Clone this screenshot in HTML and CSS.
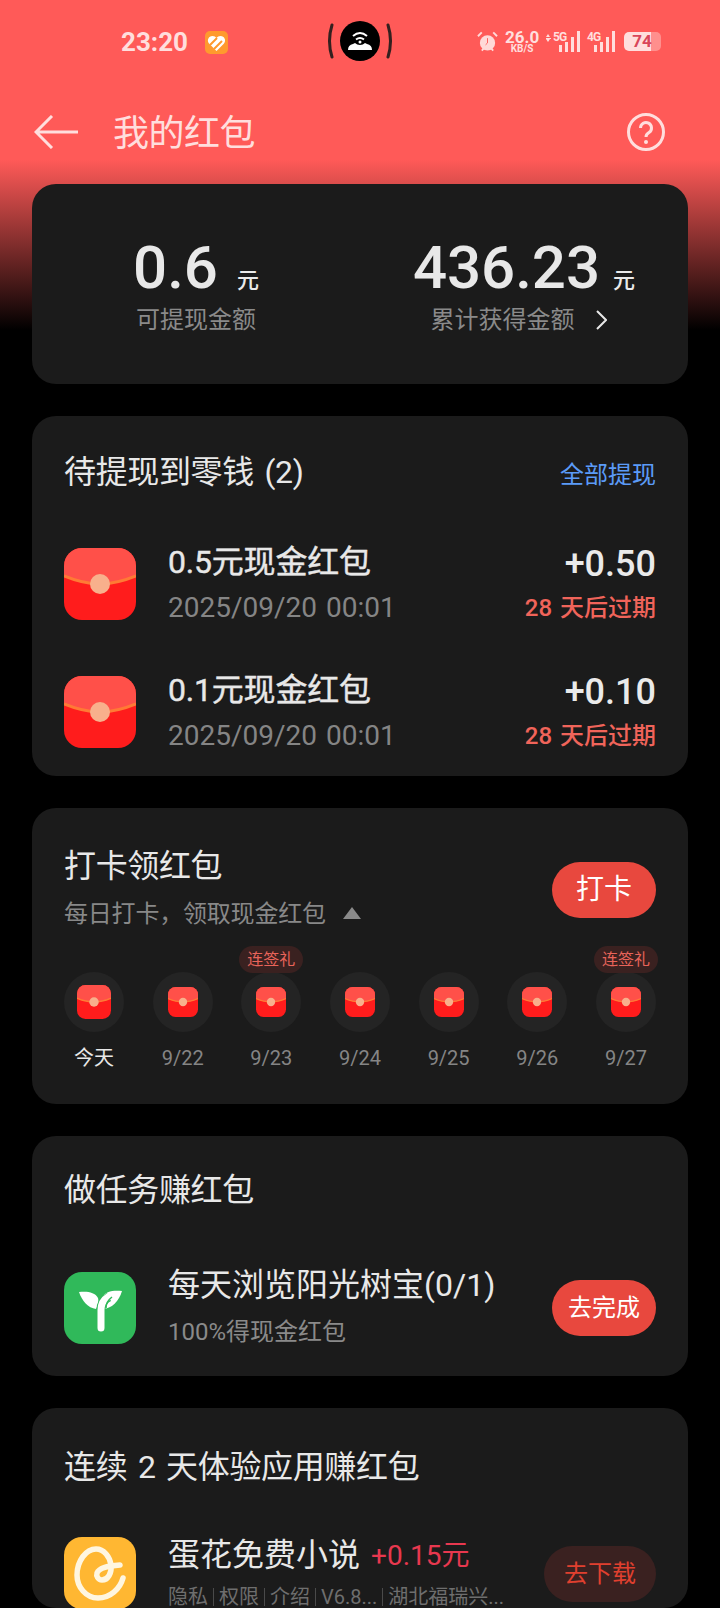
FILE: index.html
```html
<!DOCTYPE html>
<html>
  <head>
    <meta charset="UTF-8">
    <title>我的红包</title>
    <link rel="stylesheet" href="styles.css">
  </head>
  <body>
    <svg class="defs" width="0" height="0">
      <symbol id="packet" viewBox="0 0 72 72">
        <rect width="72" height="72" rx="18" fill="#ff1c1c"/>
        <path d="M0 18a18 18 0 0 1 18-18h36a18 18 0 0 1 18 18v10c-12 5-24 8-36 8s-24-3-36-8z" fill="#ff5049"/>
        <path d="M0 28c12 5 24 8 36 8s24-3 36-8" fill="none" stroke="#ff7a35" stroke-width="3"/>
        <circle cx="36" cy="36" r="10" fill="#f8b08c"/>
      </symbol>
    </svg>

    <div class="status">
      <span class="time">23:20</span>
      <svg class="heart" viewBox="0 0 23 23">
        <rect width="23" height="23" rx="5" fill="#ff9a2e"/>
        <path d="M11.500 20 4 12.500C1.500 9.500 3.500 5 7.500 5c1.800 0 3 .8 4 2 1-1.200 2.200-2 4-2 4 0 6 4.500 3.500 7.500z" fill="#fff"/>
        <path d="M5 14l7-7M9 18l8-8" stroke="#ff9a2e" stroke-width="2"/>
      </svg>
      <div class="island">
        <svg width="64" height="40" viewBox="0 0 64 40">
          <path d="M4 4Q-1 20 4 36M60 4Q65 20 60 36" fill="none" stroke="#33201f" stroke-width="3" stroke-linecap="round"/>
          <circle cx="32" cy="20" r="20" fill="#000"/>
          <path d="M20 29q0-5 5-6l2-1q2 2 5 2t5-2l2 1q5 1 5 6z" fill="#fff"/>
          <path d="M25 15q7-6 14 0M28 18.500q4-3 8 0" fill="none" stroke="#fff" stroke-width="2"/>
          <circle cx="32" cy="21" r="1.500" fill="#fff"/>
        </svg>
      </div>
      <div class="indicators">
        <svg class="alarm" viewBox="0 0 22 23">
          <circle cx="11" cy="13" r="8" fill="#ffd9d8"/>
          <path d="M1 6l4-4M21 6l-4-4M5 21l2-2M17 21l-2-2" stroke="#ffd9d8" stroke-width="2"/>
          <path d="M11 8v5l-2 2" fill="none" stroke="#ff5a58" stroke-width="1"/>
        </svg>
        <div class="speed"><b>26.0</b><span>KB/S</span></div>
        <div class="net net-5g">
          <span class="updown"></span>
          <span class="tag">5G</span>
          <span class="bars"><i class="b1"></i><i class="b2"></i><i class="b3"></i><i class="b4"></i></span>
        </div>
        <div class="net net-4g">
          <span class="tag">4G</span>
          <span class="bars"><i class="b1"></i><i class="b2"></i><i class="b3"></i><i class="b4"></i></span>
        </div>
        <div class="battery"><span>74</span></div>
      </div>
    </div>

    <div class="topbar">
      <svg class="back" viewBox="0 0 44 34">
        <path d="M18 1 2 17l16 16M2 17h42" fill="none" stroke="#ffdedd" stroke-width="3"/>
      </svg>
      <h1>我的红包</h1>
      <svg class="help" viewBox="0 0 38 38">
        <circle cx="19" cy="19" r="17.500" fill="none" stroke="#ffdedd" stroke-width="3"/>
        <path d="M13.500 15a5.500 5.500 0 1 1 8.500 4.600c-2 1.300-3 2.200-3 4.400" fill="none" stroke="#ffdedd" stroke-width="3"/>
        <circle cx="19" cy="29" r="2" fill="#ffdedd"/>
      </svg>
    </div>

    <div class="cards">
      <section class="card balance">
        <div class="sum">
          <div class="sum-value"><b>0.6</b><span>元</span></div>
          <div class="sum-label">可提现金额</div>
        </div>
        <div class="sum sum-total">
          <div class="sum-value"><b>436.23</b><span>元</span></div>
          <div class="sum-label">累计获得金额
            <svg class="chevron" viewBox="0 0 12 20"><path d="M2 1l9 9-9 9" fill="none" stroke="#e8e8e8" stroke-width="2"/></svg>
          </div>
        </div>
      </section>

      <section class="card pending">
        <div class="card-head">
          <h2>待提现到零钱 (2)</h2>
          <a class="link">全部提现</a>
        </div>
        <div class="packet-row">
          <svg class="app-icon"><use href="#packet"/></svg>
          <div class="packet-info">
            <div class="row-title">0.5元现金红包</div>
            <div class="row-date">2025/09/20 00:01</div>
          </div>
          <div class="packet-amount">
            <div class="amount">+0.50</div>
            <div class="expiry">28 天后过期</div>
          </div>
        </div>
        <div class="packet-row">
          <svg class="app-icon"><use href="#packet"/></svg>
          <div class="packet-info">
            <div class="row-title">0.1元现金红包</div>
            <div class="row-date">2025/09/20 00:01</div>
          </div>
          <div class="packet-amount">
            <div class="amount">+0.10</div>
            <div class="expiry">28 天后过期</div>
          </div>
        </div>
      </section>

      <section class="card checkin">
        <div class="checkin-head">
          <div>
            <h2>打卡领红包</h2>
            <div class="checkin-sub">每日打卡，领取现金红包<i class="caret"></i></div>
          </div>
          <a class="btn">打卡</a>
        </div>
        <div class="days">
          <div class="day today">
            <div class="day-circle"><svg><use href="#packet"/></svg></div>
            <div class="day-label">今天</div>
          </div>
          <div class="day">
            <div class="day-circle"><svg><use href="#packet"/></svg></div>
            <div class="day-label">9/22</div>
          </div>
          <div class="day">
            <div class="day-circle"><svg><use href="#packet"/></svg></div>
            <span class="gift">连签礼</span>
            <div class="day-label">9/23</div>
          </div>
          <div class="day">
            <div class="day-circle"><svg><use href="#packet"/></svg></div>
            <div class="day-label">9/24</div>
          </div>
          <div class="day">
            <div class="day-circle"><svg><use href="#packet"/></svg></div>
            <div class="day-label">9/25</div>
          </div>
          <div class="day">
            <div class="day-circle"><svg><use href="#packet"/></svg></div>
            <div class="day-label">9/26</div>
          </div>
          <div class="day">
            <div class="day-circle"><svg><use href="#packet"/></svg></div>
            <span class="gift">连签礼</span>
            <div class="day-label">9/27</div>
          </div>
        </div>
      </section>

      <section class="card tasks">
        <h2>做任务赚红包</h2>
        <div class="task-row">
          <svg class="app-icon" viewBox="0 0 72 72">
            <rect width="72" height="72" rx="18" fill="#30b95a"/>
            <path d="M15 20c8-1 16 0 19 6 1 3 0 7-2 11-8-1-14-8-17-17z" fill="#fff"/>
            <path d="M58 19c-8-1-17 0-20 7-1 3-1 7 0 11 10 0 17-8 20-18z" fill="#fff"/>
            <path d="M37 56V38c0-6 2-10 8-13" fill="none" stroke="#30b95a" stroke-width="9"/>
            <path d="M37 56V38c0-6 2-10 7-13" fill="none" stroke="#fff" stroke-width="7" stroke-linecap="round"/>
            <path d="M42 36c0-5 2-8 6-11" fill="none" stroke="#30b95a" stroke-width="1.500"/>
          </svg>
          <div class="task-info">
            <div class="row-title">每天浏览阳光树宝(0/1)</div>
            <div class="task-sub">100%得现金红包</div>
          </div>
          <a class="btn btn-small">去完成</a>
        </div>
      </section>

      <section class="card apps">
        <h2>连续 2 天体验应用赚红包</h2>
        <div class="app-row">
          <svg class="app-icon" viewBox="0 0 72 72">
            <rect width="72" height="72" rx="18" fill="#ffb732"/>
            <path d="M59 41C56 52 46 61 34 61 22 61 13 50 13 38 13 24 22 12 32 12c8 0 14 8 15 16 1 8-3 15-9 15-4 0-6-4-5-7 2-5 9-7 23-8" fill="none" stroke="#fff6e0" stroke-width="5.500" stroke-linecap="round"/>
          </svg>
          <div class="app-info">
            <div class="app-title"><span class="row-title">蛋花免费小说</span><span class="bonus">+0.15元</span></div>
            <div class="app-meta">隐私<i></i>权限<i></i>介绍<i></i>V6.8...<i></i>湖北福瑞兴...</div>
          </div>
          <a class="btn btn-muted">去下载</a>
        </div>
      </section>
    </div>
  </body>
</html>
```

FILE: styles.css
```css
html
{
  background-color:#000;
  overflow:hidden;
}
body
{
  margin:0;
  width:720px;
  height:1608px;
  overflow:hidden;
  font-family:Roboto,"Noto Sans CJK SC",sans-serif;
  color:#eaeaea;
  background:linear-gradient(#ff5a58 0,#ff5a58 160px,#000 330px);
}
h1,h2
{
  margin:0;
  font-weight:400;
}
h2
{
  font-size:32px;
  line-height:44px;
  letter-spacing:-.35px;
  word-spacing:3px;
  color:#e8e8e8;
}
.defs
{
  display:block;
  height:0;
}

/* status bar */
.status
{
  position:relative;
  height:84px;
  display:flex;
  align-items:center;
  padding-left:121px;
  color:#ffdedd;
}
.time
{
  font-size:26px;
  font-weight:700;
  width:84px;
}
.heart
{
  width:23px;
  height:23px;
}
.island
{
  position:absolute;
  left:328px;
  top:21px;
  height:40px;
}
.indicators
{
  position:absolute;
  left:477px;
  top:30px;
  height:23px;
  display:flex;
  align-items:center;
}
.alarm
{
  width:21px;
  height:23px;
}
.speed
{
  width:34px;
  margin-left:7px;
  text-align:center;
}
.speed b
{
  display:block;
  font-size:17px;
  line-height:14px;
}
.speed span
{
  display:block;
  font-size:10px;
  line-height:9px;
  font-weight:700;
}
.net
{
  position:relative;
  height:21px;
  margin-left:7px;
}
.net-5g
{
  width:34px;
}
.net-4g
{
  width:28px;
}
.updown
{
  position:absolute;
  left:0;
  top:3px;
  width:5px;
  height:8px;
  background:linear-gradient(#ffdedd,#ffdedd) center/5px 1px no-repeat;
}
.updown:before
{
  content:"";
  position:absolute;
  left:0;
  top:0;
  border-left:2.500px solid transparent;
  border-right:2.500px solid transparent;
  border-bottom:3px solid #ffdedd;
}
.updown:after
{
  content:"";
  position:absolute;
  left:0;
  bottom:0;
  border-left:2.500px solid transparent;
  border-right:2.500px solid transparent;
  border-top:3px solid #ffdedd;
}
.tag
{
  position:absolute;
  top:0;
  font-size:12px;
  line-height:12px;
  font-weight:700;
  letter-spacing:-.8px;
}
.net-5g .tag
{
  left:7px;
}
.net-4g .tag
{
  left:0;
}
.bars
{
  position:absolute;
  right:0;
  bottom:0;
  display:flex;
  align-items:flex-end;
  gap:3px;
}
.bars i
{
  width:3px;
  background-color:#ffdedd;
}
.bars .b1 { height:7px; }
.bars .b2 { height:10px; }
.bars .b3 { height:15px; }
.bars .b4 { height:21px; }
.battery
{
  width:37px;
  height:19px;
  margin-left:9px;
  border-radius:5px;
  background:linear-gradient(90deg,#ffdedd 0,#ffdedd 74%,#ff8f8d 74%);
}
.battery span
{
  display:block;
  width:36px;
  text-align:center;
  font-size:17px;
  line-height:19px;
  font-weight:700;
  color:#d9465a;
}

/* title bar */
.topbar
{
  height:100px;
  box-sizing:border-box;
  padding:0 55px 4px 34px;
  display:flex;
  align-items:center;
  color:#ffdedd;
}
.back
{
  width:44px;
  height:34px;
}
.topbar h1
{
  flex:1;
  margin:0 0 4px 35px;
  font-size:36px;
  letter-spacing:-.5px;
}
.help
{
  width:38px;
  height:38px;
}

/* cards */
.cards
{
  display:flex;
  flex-direction:column;
  gap:32px;
  padding:0 32px;
}
.card
{
  background-color:#1b1b1b;
  border-radius:24px;
  padding:0 32px;
}
.balance
{
  height:200px;
  display:flex;
  padding:0;
}
.sum
{
  width:328px;
  padding-top:52px;
  text-align:center;
}
.sum-value
{
  height:64px;
  line-height:64px;
}
.sum-value b
{
  font-size:60px;
  font-weight:500;
  color:#e8e8e8;
}
.sum-value span
{
  margin-left:19px;
  font-size:22px;
  font-weight:500;
}
.sum-total .sum-value span
{
  margin-left:13px;
}
.sum-label
{
  margin-top:3px;
  font-size:24px;
  line-height:34px;
  color:#8a8a8a;
}
.chevron
{
  width:12px;
  height:20px;
  margin:0 10px 0 15px;
  vertical-align:-2px;
}

.pending
{
  height:360px;
  box-sizing:border-box;
  padding-top:34px;
}
.card-head
{
  display:flex;
  justify-content:space-between;
  align-items:center;
  margin-bottom:54px;
}
.link
{
  font-size:24px;
  color:#5b9bf8;
}
.packet-row
{
  display:flex;
  align-items:center;
  height:72px;
  margin-bottom:56px;
}
.app-icon
{
  flex:none;
  width:72px;
  height:72px;
}
.packet-info,.task-info,.app-info
{
  flex:1;
  margin-left:32px;
}
.packet-info
{
  padding-bottom:2px;
}
.task-info
{
  padding-bottom:3px;
}
.row-title
{
  font-size:32px;
  line-height:44px;
  color:#e8e8e8;
}
.packet-info .row-title
{
  letter-spacing:-.2px;
  -webkit-text-stroke:.4px #e8e8e8;
}
.row-date
{
  margin-top:5px;
  font-size:28px;
  line-height:38px;
  word-spacing:2px;
  color:#858585;
}
.packet-amount
{
  text-align:right;
}
.amount
{
  font-size:36px;
  font-weight:500;
  line-height:44px;
}
.expiry
{
  margin-top:3px;
  font-size:24px;
  line-height:38px;
  font-weight:500;
  word-spacing:2px;
  color:#f0645a;
}

.checkin
{
  height:296px;
  box-sizing:border-box;
  padding-top:36px;
}
.checkin-head
{
  display:flex;
  justify-content:space-between;
  align-items:flex-start;
}
.checkin-sub
{
  margin-top:9px;
  font-size:24px;
  line-height:34px;
  letter-spacing:-.2px;
  color:#888;
}
.caret
{
  display:inline-block;
  margin-left:17px;
  vertical-align:3px;
  border-left:9px solid transparent;
  border-right:9px solid transparent;
  border-bottom:12px solid #8a8a8a;
}
.btn
{
  flex:none;
  width:104px;
  height:56px;
  border-radius:28px;
  line-height:56px;
  text-align:center;
  font-size:28px;
  color:#fff;
  background-color:#e8483e;
}
.checkin .btn
{
  margin-top:18px;
}
.btn-small
{
  font-size:24px;
}
.btn-muted
{
  width:112px;
  font-size:24px;
  color:#e0402f;
  background-color:#3a2120;
}
.days
{
  display:flex;
  justify-content:space-between;
  margin-top:41px;
}
.day
{
  position:relative;
  width:60px;
  text-align:center;
}
.day-circle
{
  width:60px;
  height:60px;
  border-radius:50%;
  background-color:#242424;
  display:flex;
  align-items:center;
  justify-content:center;
}
.day-circle svg
{
  width:30px;
  height:30px;
}
.today .day-circle svg
{
  width:34px;
  height:34px;
}
.day-label
{
  margin-top:11px;
  font-size:20px;
  line-height:30px;
  color:#858585;
}
.today .day-label
{
  color:#e8e8e8;
}
.gift
{
  position:absolute;
  left:-2px;
  top:-26px;
  width:64px;
  height:27px;
  border-radius:14px;
  line-height:27px;
  font-size:16px;
  color:#e8645a;
  background-color:#3a2120;
}

.tasks
{
  height:240px;
  box-sizing:border-box;
  padding-top:32px;
}
.task-row
{
  display:flex;
  align-items:center;
  margin-top:51px;
}
.task-sub
{
  margin-top:8px;
  font-size:24px;
  line-height:34px;
  color:#8a8a8a;
}

.apps
{
  height:200px;
  box-sizing:border-box;
  padding-top:37px;
  overflow:hidden;
}
.app-row
{
  display:flex;
  margin-top:48px;
}
.app-row .btn
{
  margin-top:9px;
}
.app-title
{
  display:flex;
  align-items:center;
  height:36px;
}
.bonus
{
  margin-left:11px;
  padding-bottom:5px;
  font-size:28px;
  color:#e8384f;
}
.app-meta
{
  margin-top:13px;
  font-size:20px;
  line-height:22px;
  color:#6e6e6e;
  white-space:nowrap;
}
.app-meta i
{
  display:inline-block;
  width:1px;
  height:18px;
  margin:0 5px;
  vertical-align:-2px;
  background-color:#4a4a4a;
}
```
